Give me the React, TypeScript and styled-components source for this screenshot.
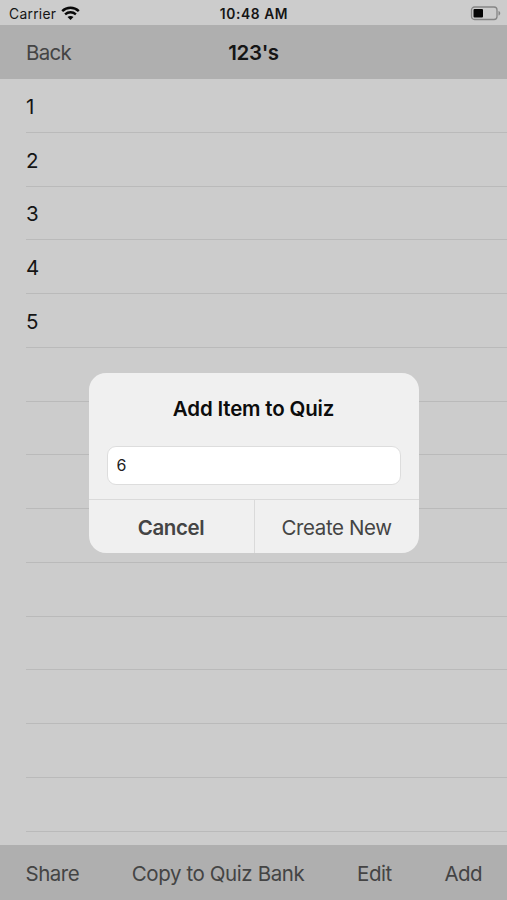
import React from "react";
import styled, { createGlobalStyle } from "styled-components";

const GlobalStyle = createGlobalStyle`
  * { box-sizing: border-box; }
  body { margin: 0; background: #cccccc; }
  button, input { font: inherit; color: inherit; letter-spacing: inherit; }
`;

const Screen = styled.div`
  position: relative;
  display: flex;
  flex-direction: column;
  width: 507px;
  height: 900px;
  overflow: hidden;
  background: #cccccc;
  color: #151515;
  font-family: Inter, "Liberation Sans", sans-serif;
  font-size: 20.5px;
  letter-spacing: -0.4px;
`;

const StatusBar = styled.header`
  display: grid;
  grid-template-columns: 1fr auto 1fr;
  align-items: center;
  flex: none;
  height: 25px;
  padding: 2px 5px 0 9px;
  font-size: 13.8px;
  letter-spacing: 0.3px;
`;

const Carrier = styled.div`
  display: flex;
  align-items: center;
  gap: 5px;
`;

const Clock = styled.time`
  margin-right: 3px;
  font-weight: 600;
  letter-spacing: 0.6px;
`;

const Battery = styled.svg`
  justify-self: end;
`;

const NavBar = styled.nav`
  display: grid;
  grid-template-columns: 1fr auto 1fr;
  align-items: center;
  flex: none;
  height: 54px;
  padding: 1px 26px 0;
  background: #afafaf;
`;

const Title = styled.h1`
  margin: 0;
  font-size: inherit;
  font-weight: 600;
`;

const BarButton = styled.button<{ $tracking?: number }>`
  justify-self: start;
  padding: 0;
  border: 0;
  background: none;
  color: #444444;
  white-space: nowrap;
  letter-spacing: ${(p) => p.$tracking ?? -0.4}px;
`;

const List = styled.ul`
  flex: 1;
  min-height: 0;
  margin: 0;
  padding: 0 0 0 26px;
  overflow: hidden;
  list-style: none;
`;

const Row = styled.li`
  display: flex;
  align-items: center;
  height: 53.78px;
  padding-top: 2px;
  border-bottom: 1px solid #bababa;
`;

const Toolbar = styled.footer`
  display: flex;
  align-items: center;
  justify-content: space-between;
  flex: none;
  height: 55px;
  padding: 1px 25px 0 25.5px;
  background: #afafaf;
`;

const Overlay = styled.div`
  position: absolute;
  inset: 0;
  display: flex;
  align-items: center;
  justify-content: center;
  padding-top: 26px;
`;

const Dialog = styled.section`
  display: flex;
  flex-direction: column;
  width: 330px;
  height: 180px;
  overflow: hidden;
  border-radius: 17px;
  background: #f0f0f0;
`;

const DialogTitle = styled.h2`
  margin: 0;
  padding-top: 22px;
  font-size: 20.5px;
  line-height: 27px;
  font-weight: 600;
  letter-spacing: -0.18px;
  text-align: center;
  color: #0c0c0c;
`;

const Field = styled.input`
  height: 39px;
  margin: 24px 18px 0;
  padding: 0 9px 2px;
  border: 1px solid #dddddd;
  border-radius: 9px;
  outline: none;
  background: #ffffff;
  color: #222222;
  font-size: 16px;
`;

const Actions = styled.div`
  display: grid;
  grid-template-columns: 165px 1fr;
  height: 54px;
  margin-top: auto;
  border-top: 1px solid #dadada;
`;

const Action = styled.button<{ $strong?: boolean }>`
  padding: 1px 0 0;
  border: 0;
  border-left: ${(p) => (p.$strong ? "0" : "1px solid #dadada")};
  background: none;
  color: #444444;
  font-weight: ${(p) => (p.$strong ? 600 : 400)};
`;

const rows = ["1", "2", "3", "4", "5", "", "", "", "", "", "", "", "", ""];

export default function App() {
  return (
    <Screen>
      <GlobalStyle />
      <StatusBar>
        <Carrier>
          <span>Carrier</span>
          <svg width="19" height="15" viewBox="0 0 19 15" fill="none" stroke="#080808">
            <path d="M1.2 5.1C5.9 .7 13.1 .7 17.8 5.1" strokeWidth="2.5" />
            <path d="M4.1 8.3C7.2 5.5 11.8 5.5 14.9 8.3" strokeWidth="2.4" />
            <path d="M6.5 11C8.2 9.5 10.8 9.5 12.5 11L9.5 14Z" fill="#080808" stroke="none" />
          </svg>
        </Carrier>
        <Clock>10:48 AM</Clock>
        <Battery width="32" height="15" viewBox="0 0 32 15">
          <rect x="1.5" y="1" width="25.5" height="12.5" rx="3" fill="none" stroke="#858585" strokeWidth="1.3" />
          <rect x="3.5" y="3" width="9.5" height="8.5" rx="1" fill="#050505" />
          <path d="M28.5 5v4.5c2.3-.7 2.3-3.8 0-4.5" fill="#858585" />
        </Battery>
      </StatusBar>
      <NavBar>
        <BarButton $tracking={-0.75}>Back</BarButton>
        <Title>123's</Title>
      </NavBar>
      <List>
        {rows.map((label, i) => (
          <Row key={i}>{label}</Row>
        ))}
      </List>
      <Toolbar>
        <BarButton $tracking={-0.5}>Share</BarButton>
        <BarButton>Copy to Quiz Bank</BarButton>
        <BarButton>Edit</BarButton>
        <BarButton $tracking={-0.6}>Add</BarButton>
      </Toolbar>
      <Overlay>
        <Dialog role="dialog" aria-label="Add Item to Quiz">
          <DialogTitle>Add Item to Quiz</DialogTitle>
          <Field defaultValue="6" aria-label="Item" />
          <Actions>
            <Action $strong>Cancel</Action>
            <Action>Create New</Action>
          </Actions>
        </Dialog>
      </Overlay>
    </Screen>
  );
}
